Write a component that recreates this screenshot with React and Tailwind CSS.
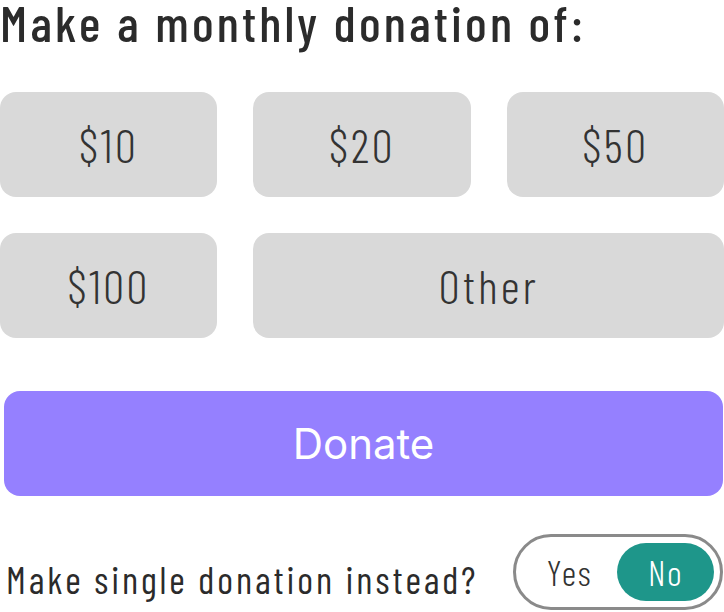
import { useState } from 'react';

const amounts = ['$10', '$20', '$50', '$100'];

export default function App() {
  const [selected, setSelected] = useState(null);
  const [single, setSingle] = useState(false);

  return (
    <div className="w-[724px] h-[612px] bg-white text-[#2b2b2b] font-['Barlow_Condensed',sans-serif] overflow-hidden">
      {/* Heading */}
      <h1 className="text-[51px] leading-[44px] font-medium tracking-[3.2px] whitespace-nowrap">
        Make a monthly donation of:
      </h1>

      {/* Amount options */}
      <div className="mt-[48px] grid grid-cols-3 gap-[36px]">
        {amounts.map((a) => (
          <button
            key={a}
            onClick={() => setSelected(a)}
            className="h-[105px] rounded-[16px] bg-[#d9d9d9] text-[47px] font-light tracking-[2.5px] text-[#333]"
          >
            {a}
          </button>
        ))}
        <button
          onClick={() => setSelected('other')}
          className="col-span-2 h-[105px] rounded-[16px] bg-[#d9d9d9] text-[47px] font-light tracking-[3px] text-[#333]"
        >
          Other
        </button>
      </div>

      {/* Donate */}
      <div className="mt-[53px] pl-[4px] pr-[1px]">
        <button className="w-full h-[105px] rounded-[16px] bg-[#9580ff] text-white text-[42px] font-['Inter',sans-serif]">
          Donate
        </button>
      </div>

      {/* Single donation toggle */}
      <div className="mt-[38px] flex items-center justify-between pl-[6px] pr-[1px]">
        <span className="text-[38px] tracking-[2.9px] pt-[14px] whitespace-nowrap">Make single donation instead?</span>
        <div className="w-[210px] h-[76px] rounded-full border-[3px] border-[#8a8a8a] flex items-center p-[6px]">
          <button
            onClick={() => setSingle(true)}
            className={`flex-1 h-full rounded-full text-[36px] font-light tracking-[1.5px] ${single ? 'bg-[#1e968a] text-white' : 'text-[#333]'}`}
          >
            Yes
          </button>
          <button
            onClick={() => setSingle(false)}
            className={`w-[97px] h-full rounded-full text-[36px] font-light tracking-[1.5px] ${!single ? 'bg-[#1e968a] text-white' : 'text-[#333]'}`}
          >
            No
          </button>
        </div>
      </div>
    </div>
  );
}
